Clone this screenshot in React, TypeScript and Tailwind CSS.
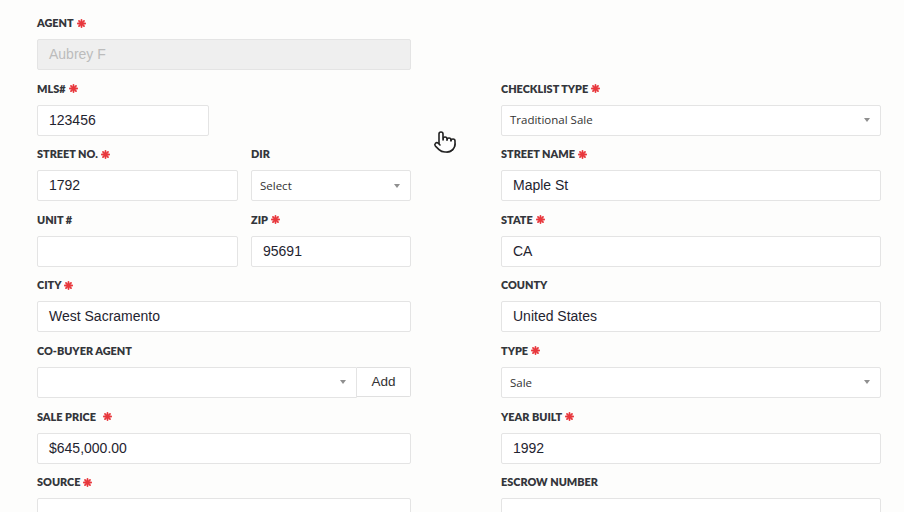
import { Pointer } from 'lucide-react'

const label = 'flex items-center h-[14px] text-[10.9px] leading-[14px] font-extrabold uppercase text-[#34363b] [font-family:Lato,"Open_Sans",sans-serif] mb-[9px]'
const input =
  'flex h-[31px] items-center rounded-[2px] border border-[#e4e4e4] px-[11px] text-[14px] [font-family:"Liberation_Sans",Arial,sans-serif]'
const select =
  'flex h-[31px] items-center justify-between rounded-[2px] border border-[#e4e4e4] bg-white pl-[8px] pr-[10px] text-[11.5px] text-[#333] [font-family:"Open_Sans",sans-serif]'

function Req() {
  return (
    <svg width="9" height="9" viewBox="0 0 10 10" className="ml-[3px]" aria-hidden>
      <g stroke="#e8383d" strokeWidth="2" strokeLinecap="round">
        <line x1="5" y1="1" x2="5" y2="9" />
        <line x1="1" y1="5" x2="9" y2="5" />
        <line x1="2.2" y1="2.2" x2="7.8" y2="7.8" />
        <line x1="7.8" y1="2.2" x2="2.2" y2="7.8" />
      </g>
    </svg>
  )
}

function Label({ text, req, gap }: { text: string; req?: boolean; gap?: boolean }) {
  return (
    <label className={label}>
      {text}
      {gap && <span className="inline-block w-[4px]" />}
      {req && <Req />}
    </label>
  )
}

function Caret() {
  return <span className="h-0 w-0 border-x-[3.5px] border-t-[4px] border-x-transparent border-t-[#8f8f8f]" />
}

function Field({ text, req, value, muted, className = '', gap }: { text: string; req?: boolean; value?: string; muted?: boolean; className?: string; gap?: boolean }) {
  return (
    <div className={className}>
      <Label text={text} req={req} gap={gap} />
      <div className={`${input} ${muted ? 'bg-[#efefef] text-[#bcbcbc]' : 'bg-white text-[#1f2430]'}`}>{value}</div>
    </div>
  )
}

function SelectField({ text, req, value }: { text: string; req?: boolean; value: string }) {
  return (
    <div>
      <Label text={text} req={req} />
      <div className={select}>
        <span>{value}</span>
        <Caret />
      </div>
    </div>
  )
}

export default function App() {
  return (
    <div className="relative min-h-[512px] overflow-hidden bg-[#fdfdfc] pl-[37px] pt-[16px]">
      <div className="grid w-[844px] grid-cols-[374px_380px] gap-x-[90px] gap-y-[11.6px]">
        <Field text="Agent" req value="Aubrey F" muted />
        <div />

        <Field text="MLS#" req value="123456" className="w-[172px]" />
        <SelectField text="Checklist Type" req value="Traditional Sale" />

        <div className="grid grid-cols-[201px_160px] gap-x-[13px]">
          <Field text="Street No." req value="1792" />
          <SelectField text="Dir" value="Select" />
        </div>
        <Field text="Street Name" req value="Maple St" />

        <div className="grid grid-cols-[201px_160px] gap-x-[13px]">
          <Field text="Unit #" />
          <Field text="Zip" req value="95691" />
        </div>
        <Field text="State" req value="CA" />

        <Field text="City" req value="West Sacramento" />
        <Field text="County" value="United States" />

        <div>
          <Label text="Co-Buyer Agent" />
          <div className="flex">
            <div className={`${select} flex-1 rounded-r-none`}>
              <span />
              <Caret />
            </div>
            <div className="flex h-[30px] w-[54px] items-center justify-center rounded-r-[2px] border border-l-0 border-[#e0e0e0] bg-white text-[13.5px] text-[#333] [font-family:'Liberation_Sans',Arial,sans-serif]">
              Add
            </div>
          </div>
        </div>
        <SelectField text="Type" req value="Sale" />

        <Field text="Sale Price" req gap value="$645,000.00" />
        <Field text="Year Built" req value="1992" />

        <Field text="Source" req />
        <Field text="Escrow Number" />
      </div>

      <div className="absolute left-[433px] top-[130px]">
        <Pointer size={24} strokeWidth={1.6} className="fill-white text-[#222]" />
      </div>
    </div>
  )
}
